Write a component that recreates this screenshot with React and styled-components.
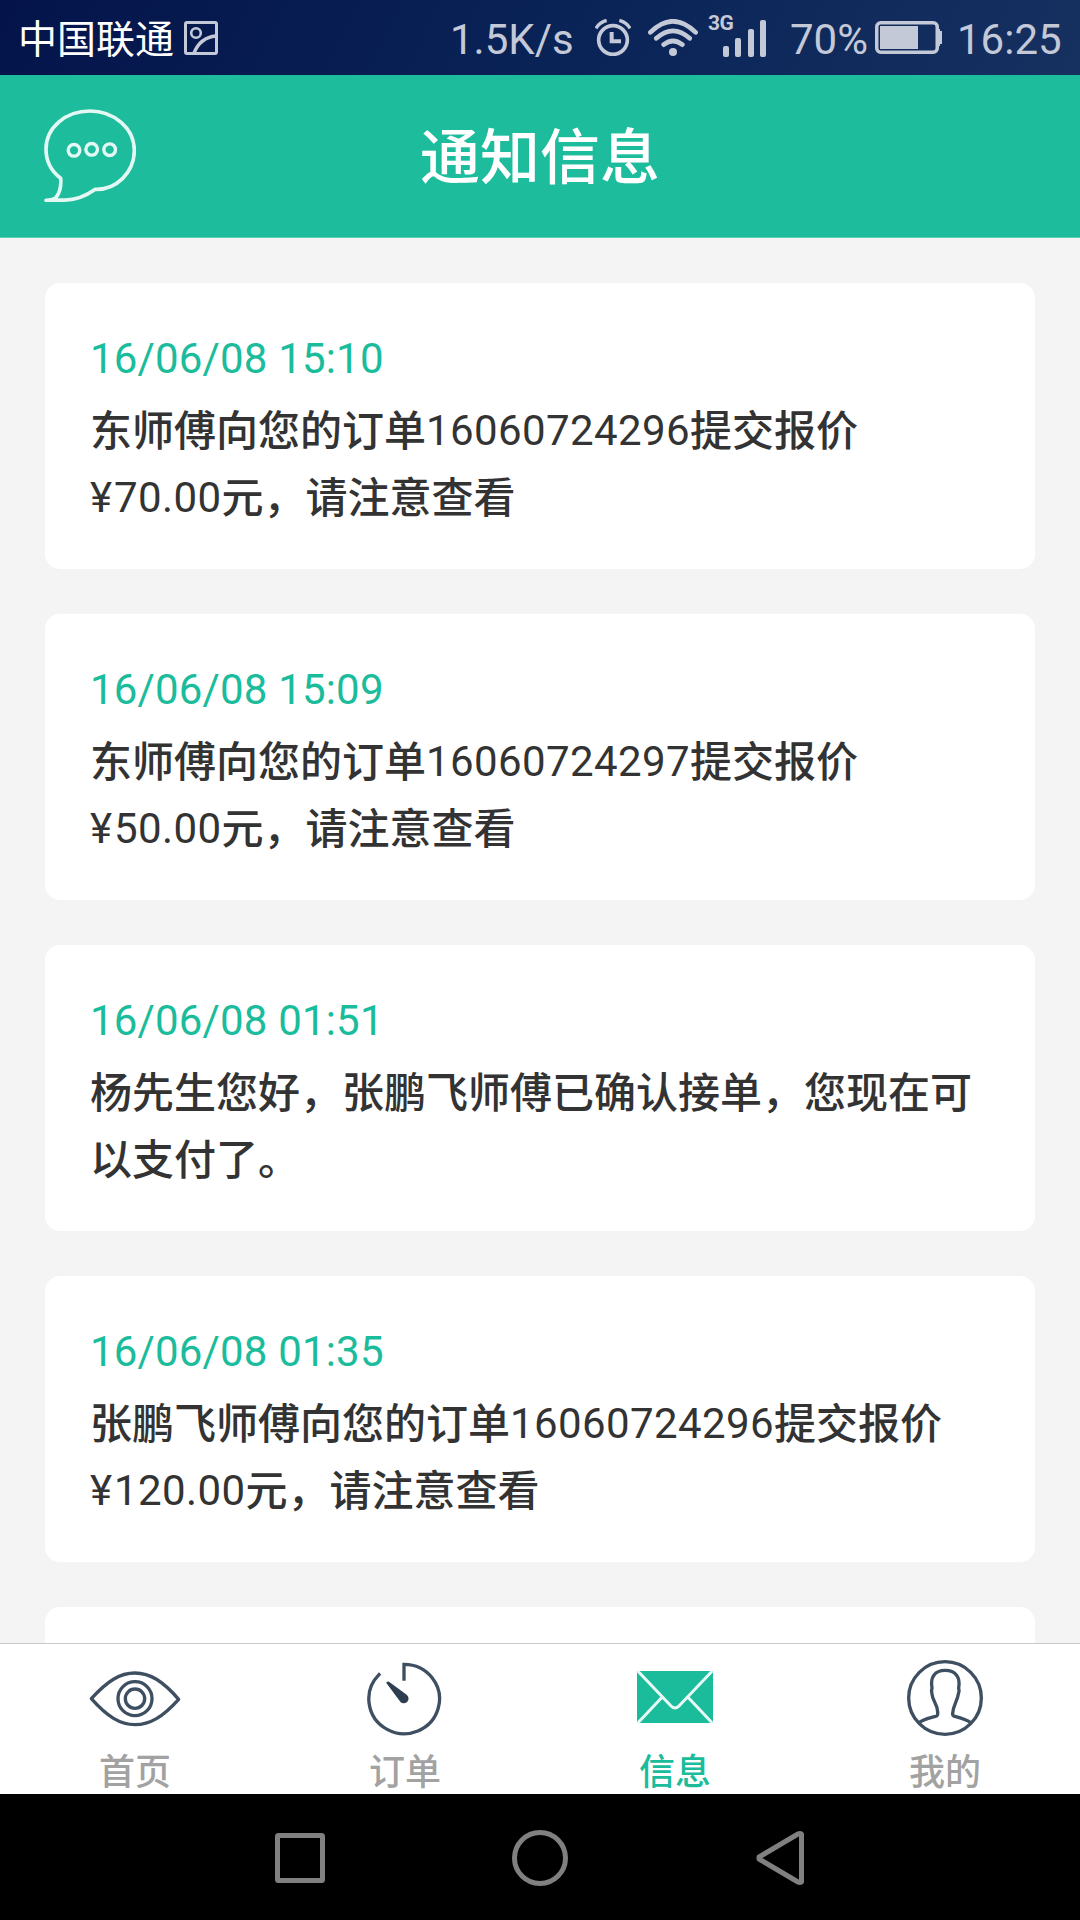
import React from "react";
import styled, { createGlobalStyle } from "styled-components";

const GlobalStyle = createGlobalStyle`
  * {
    box-sizing: border-box;
  }

  body {
    margin: 0;
    font-family: Roboto, "Noto Sans CJK SC", sans-serif;
    background: #f4f4f4;
  }

  svg {
    display: block;
    flex-shrink: 0;
    fill: none;
  }
`;

const Screen = styled.div`
  display: flex;
  flex-direction: column;
  width: 1080px;
  height: 1920px;
  overflow: hidden;
`;

const StatusBar = styled.div`
  display: flex;
  flex: 0 0 75px;
  justify-content: space-between;
  padding: 0 18px;
  color: #c4c9d8;
  background: linear-gradient(115deg, #04144a 0%, #0a2458 55%, #163160 100%);
`;

const StatusGroup = styled.div`
  display: flex;
  align-items: center;
  height: 75px;
`;

const Carrier = styled.span`
  width: 166px;
  padding-top: 6px;
  font-size: 39px;
  line-height: 69px;
  white-space: nowrap;
  color: #fff;
`;

const StatusText = styled.span`
  width: ${(props) => props.$width}px;
  padding-top: 5px;
  font-size: 42px;
  line-height: 70px;
  white-space: nowrap;
`;

const Signal = styled.div`
  display: flex;
  width: 58px;
  height: 43px;
  margin: 0 24px 5px 10px;
`;

const NetworkType = styled.span`
  width: 15px;
  height: 20px;
  font-size: 21px;
  font-weight: 700;
  line-height: 18px;
  letter-spacing: -0.5px;
  white-space: nowrap;
`;

const Bars = styled.div`
  display: flex;
  align-items: flex-end;
  justify-content: space-between;
  width: 43px;
  height: 43px;
`;

const Bar = styled.span`
  width: 6px;
  height: ${(props) => props.$height}px;
  border-radius: 2px;
  background: #c4c9d8;
`;

const Header = styled.header`
  display: grid;
  grid-template-columns: 136px 1fr 136px;
  align-items: center;
  flex: 0 0 163px;
  border-bottom: 1px solid #5fd0b6;
  background: #1cbc9c;
`;

const ChatButton = styled.div`
  padding: 0 0 1px 44px;
`;

const Title = styled.h1`
  margin: 0;
  padding-top: 5px;
  font-size: 60px;
  font-weight: 500;
  line-height: 157px;
  text-align: center;
  color: #fff;
`;

const List = styled.main`
  display: flex;
  flex: 1 1 0;
  flex-direction: column;
  gap: 45px;
  min-height: 0;
  padding: 45px 45px 0;
  overflow: hidden;
`;

const Card = styled.article`
  flex: 0 0 286px;
  padding: 45px 45px 0;
  border-radius: 15px;
  background: #fff;
`;

const Time = styled.div`
  height: 69px;
  font-size: 42px;
  line-height: 62px;
  letter-spacing: 0.17px;
  white-space: nowrap;
  color: #1abc9c;
`;

const Message = styled.p`
  margin: 0;
  font-size: 42px;
  line-height: 67px;
  white-space: nowrap;
  color: #333;
`;

const Cjk = styled.span`
  font-weight: 500;
  line-height: 1;
  vertical-align: -1px;
`;

const Number = styled.span`
  letter-spacing: 0.4px;
`;

const Yuan = styled.span`
  padding-right: 2px;
`;

const TabBar = styled.nav`
  display: grid;
  grid-template-columns: repeat(4, 1fr);
  flex: 0 0 151px;
  border-top: 1px solid #c8c8c8;
  background: #fff;
`;

const Tab = styled.div`
  display: flex;
  flex-direction: column;
  align-items: center;
  gap: 16px;
  padding-top: 16px;
  font-size: 36px;
  font-weight: 500;
  line-height: 42px;
  color: ${(props) => (props.$active ? "#1abc9c" : "#a2a2a2")};
`;

const SystemNav = styled.div`
  display: flex;
  flex: 0 0 126px;
  align-items: center;
  justify-content: center;
  padding-top: 2px;
  background: #000;
`;

const PictureIcon = () => (
  <svg width="34" height="34" viewBox="0 0 34 34" stroke="#c4c9d8">
    <rect x="1.5" y="1.5" width="31" height="31" rx="1.5" strokeWidth="3" />
    <circle cx="12" cy="12" r="4.8" strokeWidth="2.6" />
    <path d="M10 32C14 22 21 16 32 15" strokeWidth="3.4" />
  </svg>
);

const AlarmIcon = () => (
  <svg width="36" height="37" viewBox="495 54 108 111" stroke="#c4c9d8">
    <circle cx="549" cy="117" r="43" strokeWidth="11" />
    <path d="M545 93v28h28" strokeWidth="12" />
    <path d="M498 82Q508 64 530 58M600 82Q590 64 568 58" strokeWidth="10" />
  </svg>
);

const WifiIcon = () => (
  <svg width="50" height="37" viewBox="654 57 150 111" stroke="#c4c9d8">
    <path
      d="M661 97Q729 31 797 97M679 115Q729 70 779 115M701 134Q729 112 757 134"
      strokeWidth="14"
      strokeLinecap="round"
    />
    <circle cx="729" cy="156" r="12" fill="#c4c9d8" stroke="none" />
  </svg>
);

const BatteryIcon = () => (
  <svg width="67" height="33" viewBox="0 0 67 33">
    <rect
      x="1.75"
      y="1.75"
      width="60.5"
      height="29.5"
      rx="4"
      stroke="#c4c9d8"
      strokeWidth="3.5"
    />
    <rect x="5" y="5" width="38" height="23" fill="#c4c9d8" />
    <path d="M62 8h3v2h2v13h-2v2h-3z" fill="#c4c9d8" />
  </svg>
);

const ChatIcon = () => (
  <svg width="92" height="93" viewBox="132 328 276 279" stroke="#e4f8f3">
    <path
      d="M182 536C153 514 138 484 138 449C138 382 198 334 270 334C342 334 403 386 403 452C403 520 347 571 286 569C255 591 220 604 184 601L138 602Q160 601 168 594C181 576 184 556 182 536Z"
      strokeWidth="11"
      strokeLinejoin="round"
    />
    <circle cx="222" cy="452" r="17.5" strokeWidth="10" />
    <circle cx="275" cy="449" r="17.5" strokeWidth="10" />
    <circle cx="329" cy="450" r="17.5" strokeWidth="10" />
  </svg>
);

const EyeIcon = () => (
  <svg width="96" height="76" viewBox="81 90 288 228" stroke="#3e4f61">
    <path
      d="M94 206C142 153 180 129 225 129C270 129 308 153 356 208C308 261 270 284 225 284C180 284 142 260 94 206Z"
      strokeWidth="10"
      strokeLinejoin="round"
    />
    <circle cx="225" cy="206" r="51" strokeWidth="10" />
    <circle cx="225" cy="206" r="29" strokeWidth="10" />
  </svg>
);

const TimerIcon = () => (
  <svg width="96" height="76" viewBox="891 90 288 228" stroke="#3e4f61">
    <path
      d="M1032 147V103A106 104 0 1 1 957 134"
      strokeWidth="10"
      strokeLinecap="square"
      strokeLinejoin="miter"
    />
    <path
      d="M979 159Q979 153 987 155L1040 194A14 14 0 0 1 1022 217Z"
      fill="#2c3e50"
      stroke="none"
    />
  </svg>
);

const MailIcon = () => (
  <svg width="96" height="76" viewBox="81 210 288 228">
    <rect x="111" y="243" width="228" height="156" rx="6" fill="#1abc9c" />
    <path
      d="M114 244L213 348Q225 360 237 348L336 244M114 398L186 322M336 398L264 322"
      stroke="#e9f9f5"
      strokeWidth="9"
    />
  </svg>
);

const PersonIcon = () => (
  <svg width="96" height="76" viewBox="891 210 288 228" stroke="#3e4f61">
    <circle cx="1035" cy="324" r="109" strokeWidth="10" />
    <path
      d="M956 399C972 386 992 384 1010 378Q1014 376 1013 366C1012 340 997 332 996 312Q993 303 996 294C990 262 1004 241 1035 241C1067 241 1082 262 1076 294Q1079 303 1075 312C1072 334 1060 344 1058 370Q1057 377 1063 379C1082 384 1098 388 1114 399"
      strokeWidth="10"
    />
  </svg>
);

const NavIcons = () => (
  <svg
    width="530"
    height="58"
    viewBox="275 1829 530 58"
    stroke="#808080"
    strokeWidth="5"
    strokeLinejoin="round"
  >
    <rect x="277.5" y="1835.5" width="45" height="45" rx="1" />
    <circle cx="540" cy="1858" r="25.5" />
    <path d="M801.5 1834V1882Q800 1883 798 1882L759 1859V1857L798 1834Q800 1833 801.5 1834Z" />
  </svg>
);

const notices = [
  {
    time: "16/06/08 15:10",
    lines: ["东师傅向您的订单16060724296提交报价", "¥70.00元，请注意查看"],
  },
  {
    time: "16/06/08 15:09",
    lines: ["东师傅向您的订单16060724297提交报价", "¥50.00元，请注意查看"],
  },
  {
    time: "16/06/08 01:51",
    lines: ["杨先生您好，张鹏飞师傅已确认接单，您现在可", "以支付了。"],
  },
  {
    time: "16/06/08 01:35",
    lines: ["张鹏飞师傅向您的订单16060724296提交报价", "¥120.00元，请注意查看"],
  },
];

const tabs = [
  { label: "首页", Icon: EyeIcon },
  { label: "订单", Icon: TimerIcon },
  { label: "信息", Icon: MailIcon, active: true },
  { label: "我的", Icon: PersonIcon },
];

// digits keep the regular weight, chinese text is one step heavier
const renderLine = (line) =>
  line
    .split(/(¥|[\d.]+)/)
    .filter(Boolean)
    .map((part, i) => {
      if (part === "¥") return <Yuan key={i}>{part}</Yuan>;
      if (/^[\d.]/.test(part)) return <Number key={i}>{part}</Number>;
      return <Cjk key={i}>{part}</Cjk>;
    });

const App = () => (
  <>
    <GlobalStyle />
    <Screen>
      <StatusBar>
        <StatusGroup>
          <Carrier>中国联通</Carrier>
          <PictureIcon />
        </StatusGroup>
        <StatusGroup>
          <StatusText $width={145}>1.5K/s</StatusText>
          <AlarmIcon />
          <StatusText $width={17} />
          <WifiIcon />
          <Signal>
            <NetworkType>3G</NetworkType>
            <Bars>
              <Bar $height={11} />
              <Bar $height={19} />
              <Bar $height={28} />
              <Bar $height={37} />
            </Bars>
          </Signal>
          <StatusText $width={85}>70%</StatusText>
          <BatteryIcon />
          <StatusText $width={15} />
          <StatusText $width={105}>16:25</StatusText>
        </StatusGroup>
      </StatusBar>
      <Header>
        <ChatButton>
          <ChatIcon />
        </ChatButton>
        <Title>通知信息</Title>
      </Header>
      <List>
        {notices.map(({ time, lines }) => (
          <Card key={time}>
            <Time>{time}</Time>
            {lines.map((line) => (
              <Message key={line}>{renderLine(line)}</Message>
            ))}
          </Card>
        ))}
        <Card />
      </List>
      <TabBar>
        {tabs.map(({ label, Icon, active }) => (
          <Tab key={label} $active={active}>
            <Icon />
            {label}
          </Tab>
        ))}
      </TabBar>
      <SystemNav>
        <NavIcons />
      </SystemNav>
    </Screen>
  </>
);

export default App;
